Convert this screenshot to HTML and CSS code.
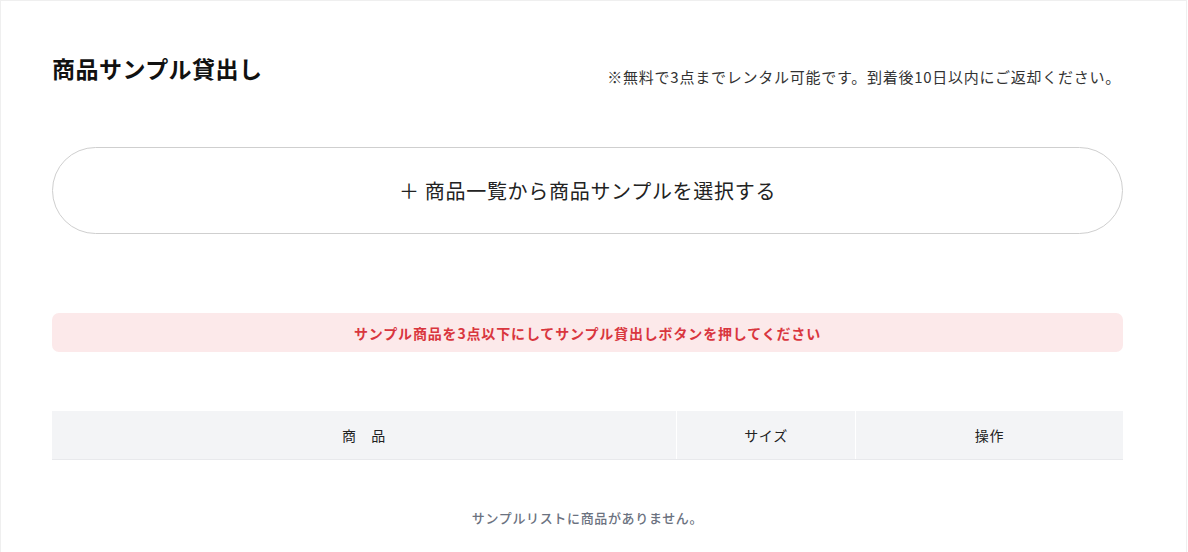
FILE: index.html
```html
<!DOCTYPE html>
<html lang="ja">
<head>
<meta charset="utf-8">
<title>商品サンプル貸出し</title>
<link rel="stylesheet" href="styles.css">
</head>
<body>
<div class="page">
  <div class="header">
    <h1 class="title">商品サンプル貸出し</h1>
    <p class="note">※無料で3点までレンタル可能です。到着後10日以内にご返却ください。</p>
  </div>
  <button class="select-btn" type="button">＋ 商品一覧から商品サンプルを選択する</button>
  <div class="alert">サンプル商品を3点以下にしてサンプル貸出しボタンを押してください</div>
  <div class="table">
    <div class="thead">
      <div class="th">商　品</div>
      <div class="th">サイズ</div>
      <div class="th">操作</div>
    </div>
    <div class="empty">サンプルリストに商品がありません。</div>
  </div>
</div>
</body>
</html>
```
FILE: styles.css
```css
* { box-sizing: border-box; }
html, body {
  margin: 0;
  padding: 0;
  background: #fff;
}
body {
  font-family: "Noto Sans CJK JP", "Noto Sans", sans-serif;
  color: #222;
}
.page {
  width: 1187px;
  min-height: 552px;
  border: 1px solid #efefef;
  border-bottom: none;
  padding: 51px 63px 0 51px;
}
.header {
  display: flex;
  justify-content: space-between;
  align-items: flex-start;
}
.title {
  margin: 0;
  font-size: 23px;
  line-height: 33px;
  font-weight: 700;
  color: #111;
  letter-spacing: 0.02em;
}
.note {
  margin: 13px 2px 0 0;
  font-size: 15px;
  line-height: 24px;
  color: #333;
  letter-spacing: 0.05em;
}
.select-btn {
  display: block;
  width: 100%;
  height: 87px;
  margin-top: 58px;
  border: 1px solid #cfcfcf;
  border-radius: 44px;
  background: #fff;
  font-family: inherit;
  font-size: 20px;
  color: #222;
  letter-spacing: 0.035em;
  cursor: pointer;
}
.alert {
  margin-top: 79px;
  height: 39px;
  border-radius: 7px;
  background: #fce9ea;
  color: #d9363e;
  font-size: 14px;
  font-weight: 700;
  letter-spacing: 0.06em;
  display: flex;
  align-items: center;
  justify-content: center;
}
.table {
  margin-top: 59px;
}
.thead {
  display: grid;
  grid-template-columns: 624px 178px 1fr;
  column-gap: 1px;
  background: #fff;
  border-bottom: 1px solid #e8e9ec;
}
.th {
  height: 48px;
  background: #f3f4f6;
  display: flex;
  align-items: center;
  justify-content: center;
  font-size: 14px;
  color: #222;
  letter-spacing: 0.05em;
}
.empty {
  padding-top: 48px;
  text-align: center;
  font-size: 13px;
  line-height: 20px;
  font-weight: 500;
  color: #6b7280;
  letter-spacing: 0.05em;
}
```
